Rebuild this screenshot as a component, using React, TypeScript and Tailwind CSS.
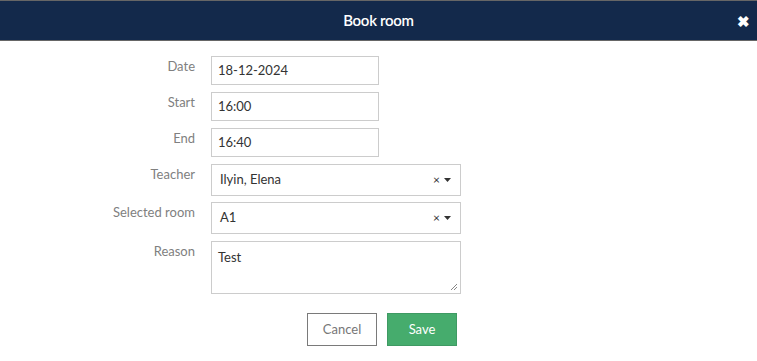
import React from 'react';

function Row({ label, children, top }: { label: string; children: React.ReactNode; top: string }) {
  return (
    <div className={`flex items-start ${top}`}>
      <div className="w-[195px] text-right text-[13px] leading-[20px] text-[#808080]">{label}</div>
      <div className="ml-[16px]">{children}</div>
    </div>
  );
}

function TextInput({ value }: { value: string }) {
  return (
    <div className="flex h-[29px] w-[168px] items-center border border-[#ccc] bg-white px-[6px] text-[13px] text-[#333]">
      {value}
    </div>
  );
}

function Select({ value }: { value: string }) {
  return (
    <div className="flex h-[32px] w-[250px] items-center border border-[#ccc] bg-white pl-[8px] pr-[9px] text-[13px] text-[#333]">
      <span className="flex-1">{value}</span>
      <span className="text-[12px] leading-none text-[#333]">×</span>
      <svg width="7" height="4" viewBox="0 0 7 4" className="ml-[4px]">
        <path d="M0 0h7L3.5 4z" fill="#333" />
      </svg>
    </div>
  );
}

export default function App() {
  return (
    <div className="h-[361px] w-[757px] bg-white font-['Lato','Noto_Sans',sans-serif]">
      <div className="relative flex h-[41px] items-center justify-center border-t border-b border-[#666] bg-[#13294b]">
        <span className="text-[15px] font-semibold tracking-[-0.3px] text-white">Book room</span>
        <span className="absolute right-[7px] top-[9px] text-[15px] font-bold text-white">✖</span>
      </div>

      <div className="pt-[15px]">
        <Row label="Date" top="">
          <TextInput value="18-12-2024" />
        </Row>
        <Row label="Start" top="mt-[7px]">
          <TextInput value="16:00" />
        </Row>
        <Row label="End" top="mt-[7px]">
          <TextInput value="16:40" />
        </Row>
        <Row label="Teacher" top="mt-[7px]">
          <Select value="Ilyin, Elena" />
        </Row>
        <Row label="Selected room" top="mt-[6px]">
          <Select value="A1" />
        </Row>
        <Row label="Reason" top="mt-[7px]">
          <div className="relative h-[53px] w-[250px] border border-[#ccc] bg-white px-[6px] pt-[5px] text-[13px] leading-[20px] text-[#333]">
            Test
            <svg width="8" height="8" viewBox="0 0 8 8" className="absolute bottom-[2px] right-[2px]">
              <path d="M7 1L1 7M7 4L4 7" stroke="#888" strokeWidth="1" />
            </svg>
          </div>
        </Row>
        <div className="mt-[19px] flex pl-[307px]">
          <button className="flex h-[33px] w-[70px] items-center justify-center border border-[#7a7a7a] bg-white text-[13px] text-[#777]">
            Cancel
          </button>
          <button className="ml-[10px] flex h-[33px] w-[70px] items-center justify-center border border-[#3f9a63] bg-[#46ac6d] text-[13px] text-white">
            Save
          </button>
        </div>
      </div>
    </div>
  );
}
